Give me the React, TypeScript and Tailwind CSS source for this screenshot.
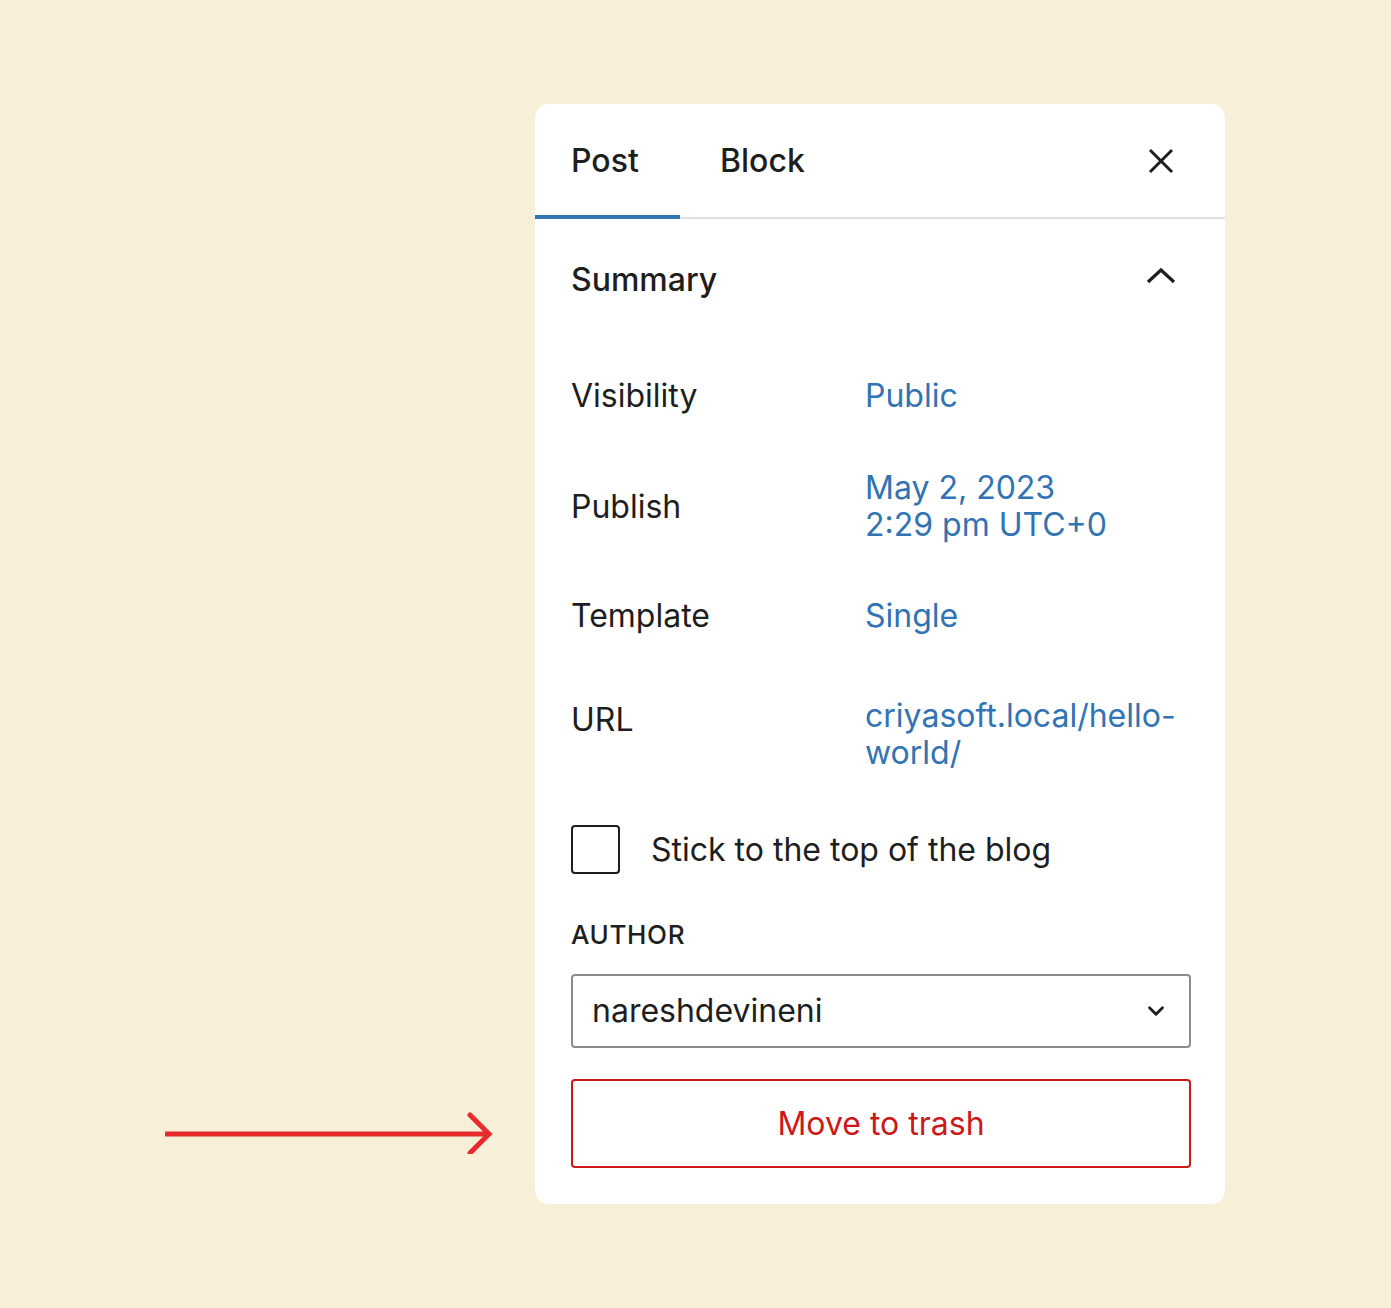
import { ChevronDown } from "lucide-react";

export default function App() {
    return (
        <div
            className="min-h-[1308px] w-full bg-[#f7efd8] flex pt-[104px] text-[#1e1e1e]"
            style={{ fontFamily: "Inter, 'Noto Sans', sans-serif" }}
        >
            <div className="w-[535px] flex flex-col justify-end pb-[154px]">
                <svg width="340" height="50" viewBox="0 0 340 50" className="ml-[160px]">
                    <line x1="5" y1="30" x2="329" y2="30" stroke="#e82a2a" strokeWidth="5" />
                    <polyline
                        points="310,11 329,30 310,49"
                        fill="none"
                        stroke="#e82a2a"
                        strokeWidth="5"
                        strokeLinecap="round"
                        strokeLinejoin="miter"
                    />
                </svg>
            </div>
            <div className="w-[690px] h-[1100px] bg-white rounded-[14px] flex flex-col">
                <div className="h-[115px] flex items-stretch border-b-2 border-[#e0e0e0]">
                    <div className="w-[145px] flex items-center pl-[36px] text-[32px] font-medium relative">
                        Post
                        <div className="absolute left-0 right-0 -bottom-[2px] h-[4px] bg-[#3173b3]" />
                    </div>
                    <div className="flex items-center pl-[40px] text-[32px] font-medium">Block</div>
                    <div className="flex-1" />
                    <div className="flex items-center pr-[50px]">
                        <svg width="28" height="28" viewBox="0 0 28 28">
                            <path d="M3 3 L25 25 M25 3 L3 25" stroke="#1e1e1e" strokeWidth="3" fill="none" />
                        </svg>
                    </div>
                </div>
                <div className="pl-[36px] pr-[34px] flex flex-col">
                    <div className="h-[122px] flex items-center justify-between">
                        <span className="text-[32px] font-medium">Summary</span>
                        <svg width="32" height="20" viewBox="0 0 32 20" className="mr-[14px] -mt-[8px]">
                            <polyline points="3,16 16,4 29,16" fill="none" stroke="#1e1e1e" strokeWidth="3.2" />
                        </svg>
                    </div>
                    <div className="flex items-center h-[110px] text-[32px]">
                        <div className="w-[294px]">Visibility</div>
                        <div className="text-[#3173b3]">Public</div>
                    </div>
                    <div className="flex items-center h-[110px] text-[32px] leading-[37px]">
                        <div className="w-[294px]">Publish</div>
                        <div className="text-[#3173b3]">
                            <div>May 2, 2023</div>
                            <div>2:29 pm UTC+0</div>
                        </div>
                    </div>
                    <div className="flex items-center h-[110px] text-[32px]">
                        <div className="w-[294px]">Template</div>
                        <div className="text-[#3173b3]">Single</div>
                    </div>
                    <div className="flex items-start mt-[26px] text-[32px] leading-[37px]">
                        <div className="w-[294px] pt-[4px]">URL</div>
                        <div className="text-[#3173b3]">
                            <div>criyasoft.local/hello-</div>
                            <div>world/</div>
                        </div>
                    </div>
                    <div className="flex items-center mt-[54px] h-[49px]">
                        <div className="w-[49px] h-[49px] border-2 border-[#1e1e1e] rounded-[4px]" />
                        <span className="ml-[31px] text-[32px]">Stick to the top of the blog</span>
                    </div>
                    <div className="mt-[42px] h-[36px] flex items-center text-[26px] font-medium tracking-wide">AUTHOR</div>
                    <div className="mt-[22px] h-[74px] border-2 border-[#8c8c8c] rounded-[4px] flex items-center justify-between pl-[19px] pr-[20px]">
                        <span className="text-[32px]">nareshdevineni</span>
                        <ChevronDown size={26} strokeWidth={2.6} color="#1e1e1e" />
                    </div>
                    <div className="mt-[31px] h-[89px] border-2 border-[#cc1818] rounded-[4px] flex items-center justify-center text-[32px] text-[#cc1818]">
                        Move to trash
                    </div>
                </div>
            </div>
        </div>
    );
}
